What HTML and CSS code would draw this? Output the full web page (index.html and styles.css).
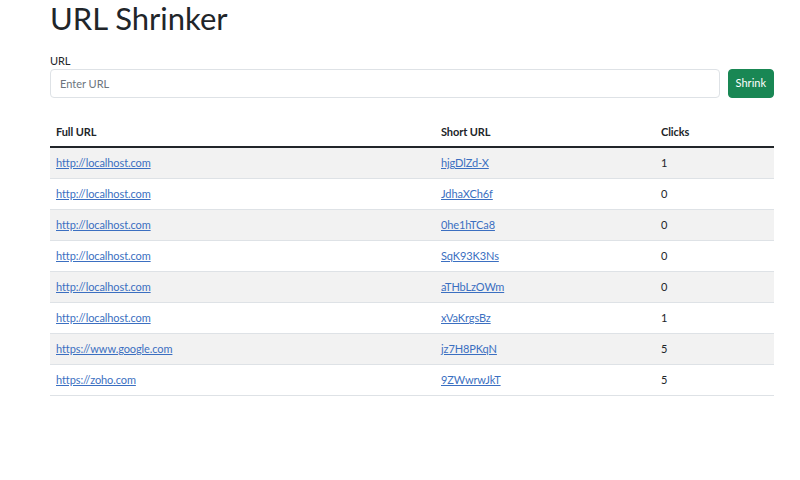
FILE: index.html
```html
<!DOCTYPE html>
<html lang="en">
<head>
<meta charset="utf-8">
<title>URL Shrinker</title>
<link rel="stylesheet" href="styles.css">
</head>
<body>
<div class="container">
  <h1 class="title">URL Shrinker</h1>
  <form class="shrink-form">
    <label class="label" for="fullUrl">URL</label>
    <div class="row">
      <input class="input" id="fullUrl" type="url" placeholder="Enter URL">
      <button class="btn" type="button">Shrink</button>
    </div>
  </form>
  <table class="table">
    <thead>
      <tr><th class="c1">Full URL</th><th class="c2">Short URL</th><th class="c3">Clicks</th></tr>
    </thead>
    <tbody>
      <tr><td><a href="#">http://localhost.com</a></td><td><a href="#">hjgDlZd-X</a></td><td>1</td></tr>
      <tr><td><a href="#">http://localhost.com</a></td><td><a href="#">JdhaXCh6f</a></td><td>0</td></tr>
      <tr><td><a href="#">http://localhost.com</a></td><td><a href="#">0he1hTCa8</a></td><td>0</td></tr>
      <tr><td><a href="#">http://localhost.com</a></td><td><a href="#">SqK93K3Ns</a></td><td>0</td></tr>
      <tr><td><a href="#">http://localhost.com</a></td><td><a href="#">aTHbLzOWm</a></td><td>0</td></tr>
      <tr><td><a href="#">http://localhost.com</a></td><td><a href="#">xVaKrgsBz</a></td><td>1</td></tr>
      <tr><td><a href="#">https://www.google.com</a></td><td><a href="#">jz7H8PKqN</a></td><td>5</td></tr>
      <tr><td><a href="#">https://zoho.com</a></td><td><a href="#">9ZWwrwJkT</a></td><td>5</td></tr>
    </tbody>
  </table>
</div>
</body>
</html>
```

FILE: styles.css
```css
* { box-sizing: border-box; }
html, body { margin: 0; padding: 0; background: #fff; }
body {
  font-family: Lato, "Open Sans", "Liberation Sans", sans-serif;
  font-size: 11px;
  letter-spacing: -0.1px;
  line-height: 1.5;
  color: #212529;
}
.container {
  width: 724px;
  margin-left: 50px;
}
.title {
  margin: 0 0 16px;
  font-size: 31px;
  font-weight: 400;
  line-height: 37px;
  letter-spacing: 0;
}
.shrink-form { margin-bottom: 19px; }
.label {
  display: block;
  margin-bottom: 0;
  line-height: 16px;
}
.row {
  display: flex;
  gap: 8px;
}
.input {
  flex: 1;
  height: 29px;
  padding: 0 9px;
  border: 1px solid #dee2e6;
  border-radius: 4px;
  font: inherit;
  color: #212529;
  background: #fff;
}
.input::placeholder { color: #6c757d; }
.btn {
  height: 29px;
  padding: 0 7px;
  border: 1px solid #198754;
  border-radius: 4px;
  background: #198754;
  color: #fff;
  font: inherit;
}
.table {
  width: 100%;
  border-collapse: collapse;
}
.table th, .table td {
  text-align: left;
  padding: 6px 6px;
  line-height: 18px;
  vertical-align: top;
}
.table th {
  font-weight: 700;
  padding-bottom: 5px;
  border-bottom: 2px solid #212529;
}
.table td {
  border-bottom: 1px solid #dee2e6;
}
.table tbody tr:nth-child(odd) td { background: #f2f2f2; }
.c1 { width: 385px; }
.c2 { width: 220px; }
.table a { color: #3b6fc1; text-decoration: underline; }
```
